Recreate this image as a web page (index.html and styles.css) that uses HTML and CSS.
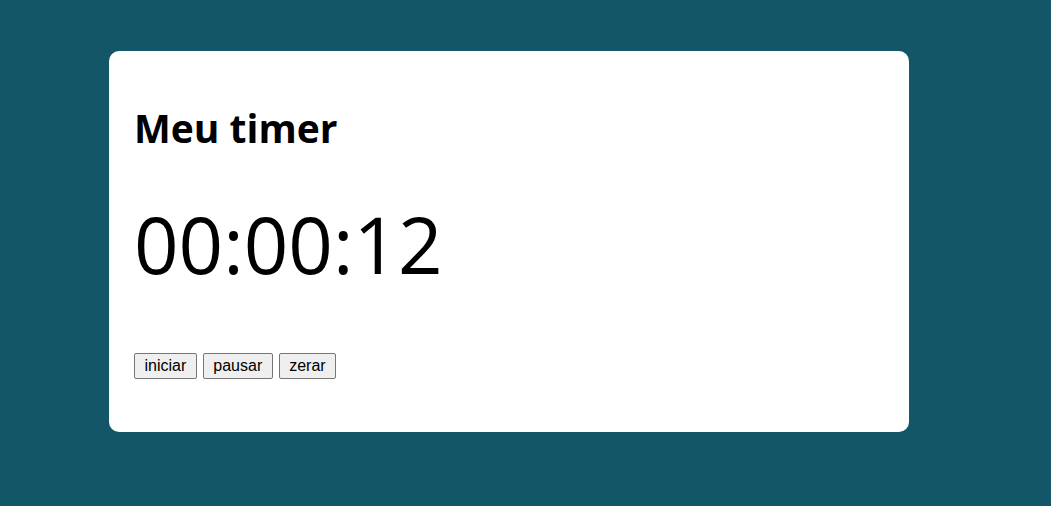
FILE: index.html
```html
<!DOCTYPE html>
<html lang="pt-BR">
<head>
<meta charset="utf-8">
<title>Meu timer</title>
<link rel="stylesheet" href="styles.css">
</head>
<body>
<main class="card">
  <h1 class="title">Meu timer</h1>
  <div class="clock">00:00:12</div>
  <div class="actions">
    <button class="btn">iniciar</button>
    <button class="btn">pausar</button>
    <button class="btn">zerar</button>
  </div>
</main>
</body>
</html>
```
FILE: styles.css
```css
html, body {
  margin: 0;
  padding: 0;
}
body {
  background: #125667;
  font-family: "Open Sans", sans-serif;
  padding: 51px 0 0 109px;
  height: 506px;
  box-sizing: border-box;
}
.card {
  width: 800px;
  height: 381px;
  box-sizing: border-box;
  background: #fff;
  border-radius: 10px;
  padding: 25px 25px;
}
.title {
  margin: 0;
  padding-top: 27px;
  font-size: 39px;
  font-weight: 700;
  line-height: 50px;
}
.clock {
  margin-top: 52px;
  font-size: 78px;
  line-height: 1;
  font-weight: 400;
}
.actions {
  margin-top: 70px;
  display: flex;
  gap: 6px;
}
.btn {
  font-family: Arial, "Liberation Sans", sans-serif;
  font-size: 16px;
  line-height: 18px;
  padding: 3px 9.5px;
  border: 1px solid #767676;
  border-radius: 2px;
  background: #efefef;
  color: #000;
}
```
